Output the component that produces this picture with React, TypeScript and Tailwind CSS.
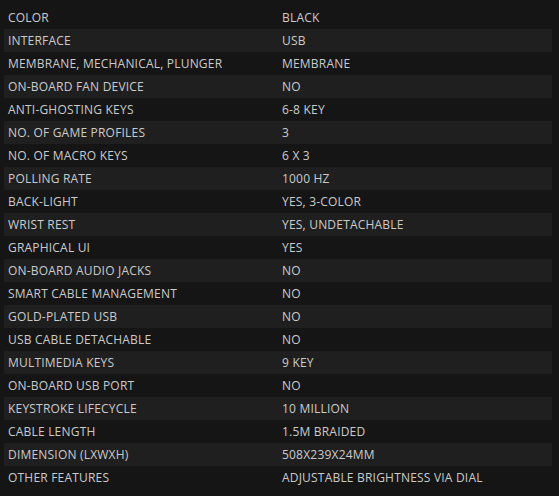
import React from "react";

const rows: [string, string][] = [
  ["COLOR", "BLACK"],
  ["INTERFACE", "USB"],
  ["MEMBRANE, MECHANICAL, PLUNGER", "MEMBRANE"],
  ["ON-BOARD FAN DEVICE", "NO"],
  ["ANTI-GHOSTING KEYS", "6-8 KEY"],
  ["NO. OF GAME PROFILES", "3"],
  ["NO. OF MACRO KEYS", "6 X 3"],
  ["POLLING RATE", "1000 HZ"],
  ["BACK-LIGHT", "YES, 3-COLOR"],
  ["WRIST REST", "YES, UNDETACHABLE"],
  ["GRAPHICAL UI", "YES"],
  ["ON-BOARD AUDIO JACKS", "NO"],
  ["SMART CABLE MANAGEMENT", "NO"],
  ["GOLD-PLATED USB", "NO"],
  ["USB CABLE DETACHABLE", "NO"],
  ["MULTIMEDIA KEYS", "9 KEY"],
  ["ON-BOARD USB PORT", "NO"],
  ["KEYSTROKE LIFECYCLE", "10 MILLION"],
  ["CABLE LENGTH", "1.5M BRAIDED"],
  ["DIMENSION (LXWXH)", "508X239X24MM"],
  ["OTHER FEATURES", "ADJUSTABLE BRIGHTNESS VIA DIAL"],
];

export default function App() {
  return (
    <div
      className="w-[559px] h-[496px] bg-[#151515] pt-[6px] pl-[4px] overflow-hidden"
      style={{ fontFamily: '"Open Sans", "Noto Sans", sans-serif' }}
    >
      <div className="w-[548px] flex flex-col">
        {rows.map(([k, v], i) => (
          <div
            key={k}
            className={`flex h-[23px] items-center text-[12px] tracking-[0.2px] text-[#cbcbcb] ${
              i % 2 === 1 ? "bg-[#1f1f1f]" : "bg-[#151515]"
            }`}
          >
            <div className="w-[273px] pl-[4px] whitespace-nowrap">{k}</div>
            <div className="flex-1 pl-[5px] whitespace-nowrap">{v}</div>
          </div>
        ))}
      </div>
    </div>
  );
}
